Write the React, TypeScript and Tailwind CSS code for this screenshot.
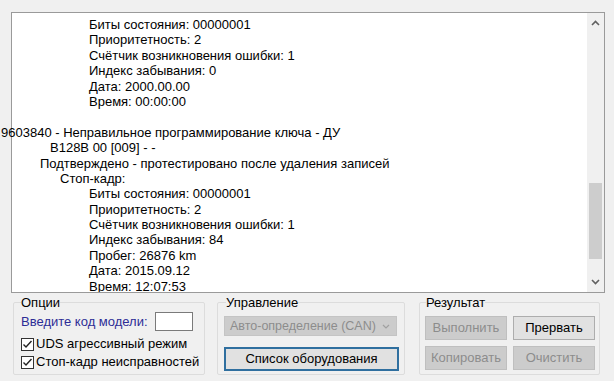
const font = { fontFamily: '"Liberation Sans", Arial, sans-serif' };

type Line = { text: string; indent: number };

const lines: Line[] = [
  { text: 'Биты состояния: 00000001', indent: 88 },
  { text: 'Приоритетность: 2', indent: 88 },
  { text: 'Счётчик возникновения ошибки: 1', indent: 88 },
  { text: 'Индекс забывания: 0', indent: 88 },
  { text: 'Дата: 2000.00.00', indent: 88 },
  { text: 'Время: 00:00:00', indent: 88 },
  { text: '', indent: 0 },
  { text: '9603840 - Неправильное программирование ключа - ДУ', indent: 0 },
  { text: 'B128B 00 [009] - -', indent: 49 },
  { text: 'Подтверждено - протестировано после удаления записей', indent: 39 },
  { text: 'Стоп-кадр:', indent: 59 },
  { text: 'Биты состояния: 00000001', indent: 88 },
  { text: 'Приоритетность: 2', indent: 88 },
  { text: 'Счётчик возникновения ошибки: 1', indent: 88 },
  { text: 'Индекс забывания: 84', indent: 88 },
  { text: 'Пробег: 26876 km', indent: 88 },
  { text: 'Дата: 2015.09.12', indent: 88 },
  { text: 'Время: 12:07:53', indent: 88 },
];

function Chevron({ up }: { up?: boolean }) {
  return (
    <svg width="9" height="6" viewBox="0 0 9 6">
      <polyline
        points={up ? '1,5 4.5,1.5 8,5' : '1,1 4.5,4.5 8,1'}
        fill="none"
        stroke="#606060"
        strokeWidth="1.6"
      />
    </svg>
  );
}

function CheckRow({ label }: { label: string }) {
  return (
    <div className="flex items-center h-[18px] gap-[2px]">
      <div className="w-[13px] h-[13px] border border-[#333] bg-white flex items-center justify-center">
        <svg width="11" height="11" viewBox="0 0 11 11">
          <polyline points="1.5,5.5 4,8 9.5,2" fill="none" stroke="#222" strokeWidth="1.4" />
        </svg>
      </div>
      <span>{label}</span>
    </div>
  );
}

function Btn({ label, disabled }: { label: string; disabled?: boolean }) {
  return (
    <div
      className={`w-[82px] h-[24px] flex items-center justify-center border ${
        disabled
          ? 'bg-[#cccccc] border-[#bfbfbf] text-[#8c8c8c]'
          : 'bg-[#e1e1e1] border-[#adadad] text-black'
      }`}
    >
      {label}
    </div>
  );
}

export default function App() {
  return (
    <div className="w-[614px] h-[381px] bg-[#f0f0f0] text-[13px] text-black overflow-hidden" style={font}>
      {/* Log output */}
      <div className="pt-[12px] pl-[11px]">
        <div className="w-[594px] h-[281px] border border-[#9a9a9a] bg-white flex">
          <div className="flex-1 pt-[4px] leading-[15.4px] [clip-path:inset(0_0_0_-20px)]">
            {lines.map((l, i) => (
              <div key={i} className="h-[15.4px] whitespace-nowrap" style={{ marginLeft: l.indent - 11 }}>
                {l.text}
              </div>
            ))}
          </div>
          <div className="w-[17px] bg-[#f0f0f0] flex flex-col items-center">
            <div className="h-[18px] flex items-center justify-center mt-[1px]">
              <Chevron up />
            </div>
            <div className="flex-1 w-full px-[2px] pt-[151px]">
              <div className="h-[76px] bg-[#cdcdcd]" />
            </div>
            <div className="h-[18px] flex items-center justify-center mb-[1px]">
              <Chevron />
            </div>
          </div>
        </div>
      </div>

      {/* Group boxes */}
      <div className="flex pl-[13px] mt-[2px]">
        <fieldset className="w-[192px] h-[80px] border border-[#dcdcdc] rounded-[2px] pl-[7px]">
          <legend className="leading-[15px]">Опции</legend>
          <div className="flex items-center h-[19px] mt-[2px]">
            <span className="text-[#2d2d96]">Введите код модели:</span>
            <div className="ml-[7px] w-[38px] h-[19px] bg-white border border-[#7a7a7a]" />
          </div>
          <div className="mt-[4px]">
            <CheckRow label="UDS агрессивный режим" />
            <CheckRow label="Стоп-кадр неисправностей" />
          </div>
        </fieldset>

        <fieldset className="ml-[12px] w-[188px] h-[80px] border border-[#dcdcdc] rounded-[2px] pl-[6px]">
          <legend className="ml-[2px] leading-[15px]">Управление</legend>
          <div className="mt-[6px] w-[173px] h-[20px] bg-[#cccccc] border border-[#c4c4c4] flex items-center justify-between pl-[5px] pr-[6px] text-[12.5px] text-[#8c8c8c]">
            <span>Авто-определение (CAN)</span>
            <svg width="8" height="5" viewBox="0 0 8 5">
              <polyline points="1,1 4,4 7,1" fill="none" stroke="#a0a0a0" strokeWidth="1.2" />
            </svg>
          </div>
          <div className="mt-[11px] w-[175px] h-[24px] bg-[#e1e1e1] border-2 border-[#2f6f9f] flex items-center justify-center">
            Список оборудования
          </div>
        </fieldset>

        <fieldset className="ml-[14px] w-[181px] h-[80px] border border-[#dcdcdc] rounded-[2px] pl-[5px]">
          <legend className="ml-[1px] leading-[15px]">Результат</legend>
          <div className="mt-[6px] flex gap-[6px]">
            <Btn label="Выполнить" disabled />
            <Btn label="Прервать" />
          </div>
          <div className="mt-[6px] flex gap-[6px]">
            <Btn label="Копировать" disabled />
            <Btn label="Очистить" disabled />
          </div>
        </fieldset>
      </div>
    </div>
  );
}
